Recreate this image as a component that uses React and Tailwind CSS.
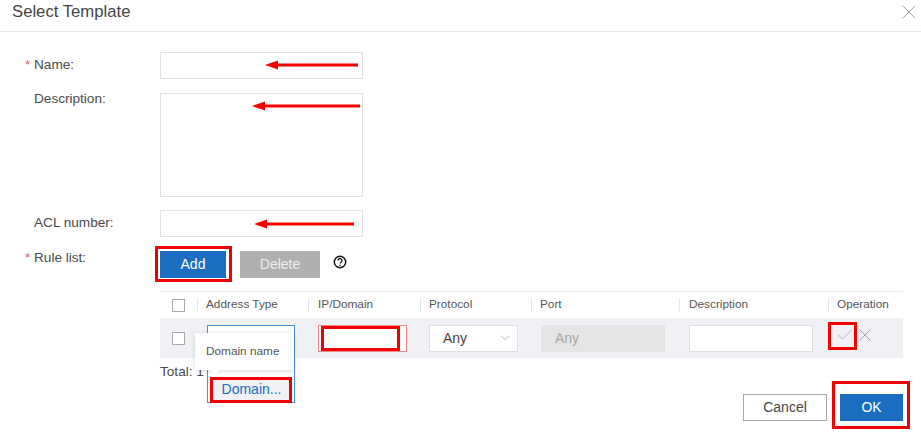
import { X, Check, ChevronDown } from 'lucide-react'

const columns = [
  { label: 'Address Type', width: 'w-[111px] pl-[8px]' },
  { label: 'IP/Domain', width: 'w-[112px] pl-[9px]' },
  { label: 'Protocol', width: 'w-[111px] pl-[8px]' },
  { label: 'Port', width: 'w-[148px] pl-[8px]' },
  { label: 'Description', width: 'w-[149px] pl-[9px]' },
  { label: 'Operation', width: 'w-[75px] pl-[8px]' },
]

function RedBox({ className }) {
  return <div className={`absolute border-[3px] border-[#f00000] pointer-events-none ${className}`} />
}

function RedArrow({ className, width }) {
  return (
    <svg className={`absolute ${className}`} width={width} height="10" viewBox={`0 0 ${width} 10`}>
      <path d={`M0 5 L13 0.5 L13 3.6 L${width} 3.6 L${width} 6.4 L13 6.4 L13 9.5 Z`} fill="#f40000" />
    </svg>
  )
}

function Checkbox() {
  return <div className="w-[13px] h-[13px] border border-[#a9a9a9] bg-white" />
}

function FormRow({ label, required, labelOffset = 'mt-[3px]', children, className }) {
  return (
    <div className={`flex ${className}`}>
      <div className={`w-[160px] flex shrink-0 text-[13.6px] leading-[20px] text-[#4a4a4a] ${labelOffset}`}>
        <span className="w-[34px] pl-[25px] text-[#f06060]">{required ? '*' : ''}</span>
        <span>{label}</span>
      </div>
      {children}
    </div>
  )
}

export default function App() {
  return (
    <div className="relative w-[921px] h-[443px] overflow-hidden bg-white font-['Liberation_Sans',Arial,sans-serif]">
      {/* Header */}
      <div className="flex items-center justify-between h-[32px] pl-[12px] pb-[8px] border-b border-[#e6e6e6]">
        <h1 className="text-[16.7px] text-[#444]">Select Template</h1>
        <X size={24} strokeWidth={1} className="text-[#a0a0a0]" />
      </div>

      {/* Form */}
      <div className="pt-[20px]">
        <FormRow label="Name:" required className="mb-[14px]">
          <div className="relative w-[203px] h-[27px] border border-[#e2e2e2]">
            <RedArrow className="left-[104px] top-[7px]" width={93} />
          </div>
        </FormRow>
        <FormRow label="Description:" labelOffset="-mt-[4px]" className="mb-[13px]">
          <div className="relative w-[203px] h-[104px] border border-[#e2e2e2]">
            <RedArrow className="left-[91px] top-[7px]" width={108} />
          </div>
        </FormRow>
        <FormRow label="ACL number:" className="mb-[14px]">
          <div className="relative w-[203px] h-[27px] border border-[#e2e2e2]">
            <RedArrow className="left-[93px] top-[8px]" width={100} />
          </div>
        </FormRow>
        <FormRow label="Rule list:" required labelOffset="-mt-[3px]" className="mb-[13px]">
          <div className="flex items-center">
            <div className="relative mr-[14px]">
              <button className="w-[66px] h-[27px] bg-[#1a6dc0] text-white text-[14px]">Add</button>
              <RedBox className="-left-[5px] -top-[5px] w-[77px] h-[36px]" />
            </div>
            <button className="w-[80px] h-[27px] bg-[#b0b0b0] text-[#eeeeee] text-[14px] mr-[13px]">Delete</button>
            <svg width="14" height="14" viewBox="0 0 14 14" className="mb-[6px]">
              <circle cx="7" cy="7" r="5.7" fill="none" stroke="#111" strokeWidth="1.5" />
              <path d="M5 5.6a2 2 0 1 1 3.1 1.6c-.7.4-1.1.8-1.1 1.4" fill="none" stroke="#111" strokeWidth="1.3" />
              <circle cx="7" cy="10.3" r=".8" fill="#111" />
            </svg>
          </div>
        </FormRow>

        {/* Rule table */}
        <div className="ml-[160px] w-[743px]">
          <div className="flex items-center h-[27px] border-t border-[#e8e8e8] text-[11.8px] text-[#555]">
            <div className="w-[37px] pl-[12px]">
              <Checkbox />
            </div>
            {columns.map((col) => (
              <div key={col.label} className={`${col.width} h-[14px] flex items-center border-l border-[#e6e6e6]`}>
                {col.label}
              </div>
            ))}
          </div>

          <div className="flex items-center h-[40px] bg-[#eff1f5] text-[14px]">
            <div className="w-[37px] pl-[12px]">
              <Checkbox />
            </div>
            <div className="w-[111px] pl-[10px] h-full pt-[7px]">
              {/* Address type dropdown, open over the rows below */}
              <div className="relative w-[88px] h-[78px] border border-[#4a90d9] bg-white">
                <div className="absolute left-[3px] bottom-0 w-[81px] h-[25px] flex items-center justify-center bg-[#eff1f5] text-[#1a6dc0]">
                  Domain...
                </div>
                <RedBox className="left-[2px] -bottom-[1px] w-[82px] h-[26px]" />
                <div className="absolute -left-[13px] top-[7px] w-[99px] h-[37px] flex items-center pl-[11px] bg-white text-[11.8px] text-[#555] shadow-[0_1px_5px_rgba(0,0,0,0.16)]">
                  Domain name
                  <div className="absolute left-[16px] -bottom-[3px] w-[7px] h-[7px] rotate-45 bg-white" />
                </div>
              </div>
            </div>
            <div className="w-[112px] pl-[10px]">
              <div className="relative w-[89px] h-[27px] border border-[#f08a8a] bg-white">
                <RedBox className="left-[2px] top-0 w-[79px] h-[25px]" />
              </div>
            </div>
            <div className="w-[111px] pl-[9px]">
              <div className="flex items-center justify-between w-[89px] h-[27px] pl-[13px] pr-[5px] border border-[#e0e0e0] bg-white text-[#444]">
                Any
                <ChevronDown size={14} strokeWidth={1} className="text-[#888]" />
              </div>
            </div>
            <div className="w-[148px] pl-[10px]">
              <div className="flex items-center w-[124px] h-[27px] pl-[14px] bg-[#e5e5e5] text-[#a5a5a5]">Any</div>
            </div>
            <div className="w-[149px] pl-[10px]">
              <div className="w-[124px] h-[27px] border border-[#e0e0e0] bg-white" />
            </div>
            <div className="w-[75px] flex items-center pb-[6px] relative">
              <Check size={20} strokeWidth={1} className="ml-[7px] text-[#a0a0a0]" />
              <X size={22} strokeWidth={1} className="-ml-[1px] text-[#a0a0a0]" />
              <RedBox className="left-0 top-[-2px] w-[29px] h-[28px]" />
            </div>
          </div>

          <div className="h-[28px] pt-[5px] text-[13.6px] leading-[18px] text-[#4a4a4a]">Total: 1</div>
        </div>

        {/* Footer */}
        <div className="flex justify-end pr-[18px] pt-[8px]">
          <button className="w-[84px] h-[27px] border border-[#a8a8a8] bg-white text-[14px] text-[#444] mr-[13px]">Cancel</button>
          <div className="relative">
            <button className="w-[63px] h-[27px] bg-[#1a6dc0] text-white text-[14px]">OK</button>
            <RedBox className="-left-[8px] -top-[13px] w-[78px] h-[48px]" />
          </div>
        </div>
      </div>
    </div>
  )
}
